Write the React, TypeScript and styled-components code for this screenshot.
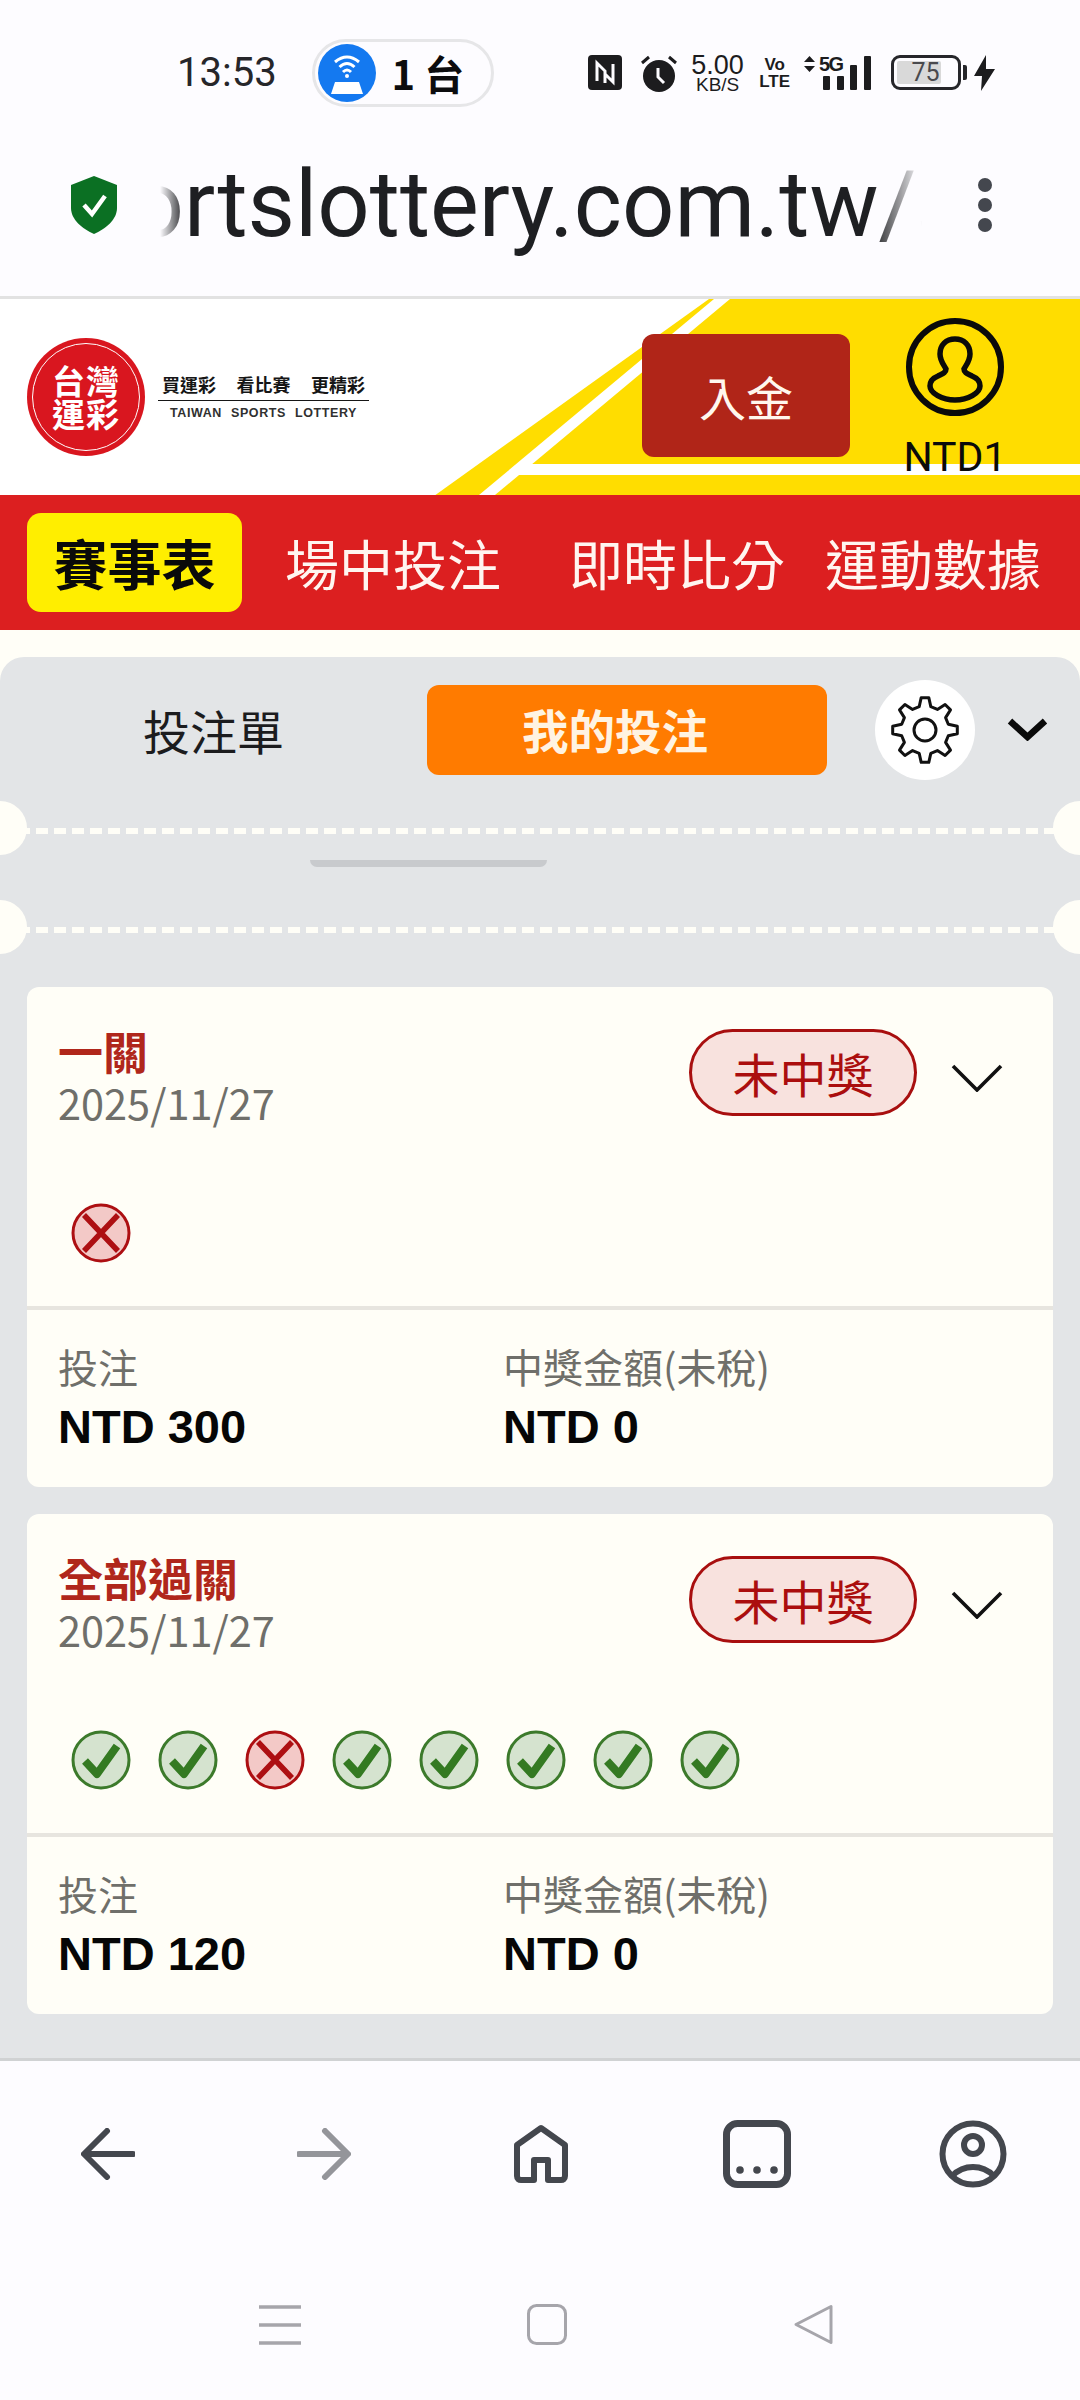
import React from 'react';
import styled, { createGlobalStyle } from 'styled-components';

const CJK = '"Noto Sans CJK TC", "Noto Sans", sans-serif';

const GlobalStyle = createGlobalStyle`
  html, body {
    margin: 0;
    padding: 0;
    background: #fdfcff;
    font-family: ${CJK};
  }
`;

// 8 tooth outline, centre 35/35
const gearPath = () => {
  const teeth = 8;
  const points: string[] = [];
  for (let i = 0; i < teeth; i++) {
    const a = (i * 2 * Math.PI) / teeth;
    const step = Math.PI / teeth;
    const pt = (r: number, t: number) =>
      `${(35 + r * Math.sin(t)).toFixed(1)} ${(35 - r * Math.cos(t)).toFixed(1)}`;
    points.push(pt(24, a - step * 0.62), pt(32.5, a - step * 0.3), pt(32.5, a + step * 0.3), pt(24, a + step * 0.62));
  }
  return `M${points.join(' L')} Z`;
};

interface BetCardProps {
  title: string;
  stake: string;
  results: boolean[];
}

const BetCard: React.FC<BetCardProps> = ({ title, stake, results }) => (
  <Card>
    <CardHead>
      <CardTop>
        <div>
          <CardTitle>{title}</CardTitle>
          <CardDate>2025/11/27</CardDate>
        </div>
        <Badge>未中獎</Badge>
        <CardChevron viewBox="0 0 52 28">
          <path d="M2 2 L26 26 L50 2" fill="none" stroke="#111" strokeWidth="3.6" />
        </CardChevron>
      </CardTop>
      <ResultRow>
        {results.map((won, index) => (
          <ResultIcon key={index} viewBox="0 0 60 60">
            {won ? (
              <>
                <circle cx="30" cy="30" r="28" fill="#d5e3cf" stroke="#3c7a2b" strokeWidth="3" />
                <path d="M14 31 L26 44 L46 16" fill="none" stroke="#347a22" strokeWidth="8" strokeLinejoin="round" />
              </>
            ) : (
              <>
                <circle cx="30" cy="30" r="28" fill="#f3c9c7" stroke="#ad0f12" strokeWidth="3" />
                <path d="M13 12 L47 48 M47 12 L13 48" fill="none" stroke="#ad0f12" strokeWidth="5.500" />
              </>
            )}
          </ResultIcon>
        ))}
      </ResultRow>
    </CardHead>
    <CardFoot>
      <FootCol>
        <FootLabel>投注</FootLabel>
        <FootValue>{stake}</FootValue>
      </FootCol>
      <FootCol>
        <FootLabel>中獎金額(未稅)</FootLabel>
        <FootValue>NTD 0</FootValue>
      </FootCol>
    </CardFoot>
  </Card>
);

const App: React.FC = () => (
  <Page>
    <GlobalStyle />
    <StatusBar>
      <Clock>13:53</Clock>
      <HotspotPill>
        <HotspotDot>
          <svg width="40" height="44" viewBox="0 0 40 44">
            <path d="M8 11 Q20 1 32 11 M12.500 16 Q20 9 27.500 16 M16 21 Q20 17 24 21" fill="none" stroke="#fff" strokeWidth="3" />
            <circle cx="20" cy="25" r="2" fill="#fff" />
            <path d="M8 31 H32 L36 43 H4 Z" fill="#fff" />
          </svg>
        </HotspotDot>
        <HotspotText>1 台</HotspotText>
      </HotspotPill>
      <StatusIcons>
        <svg width="34" height="35" viewBox="0 0 34 35">
          <rect width="34" height="35" rx="4" fill="#1c1c1e" />
          <path d="M9 26 V8 L17 16 V28 M25 9 V27 L17 19" fill="none" stroke="#fdfcff" strokeWidth="3" />
        </svg>
        <AlarmIcon width="38" height="38" viewBox="0 0 38 38">
          <circle cx="19" cy="22" r="16" fill="#1c1c1e" />
          <path d="M2 9 L9 3 M36 9 L29 3" stroke="#1c1c1e" strokeWidth="3" />
          <path d="M18 14 V23 L24 29" fill="none" stroke="#fdfcff" strokeWidth="3" />
        </AlarmIcon>
        <Speed>
          <SpeedValue>5.00</SpeedValue>
          <SpeedUnit>KB/S</SpeedUnit>
        </Speed>
        <VoLte>
          <span>Vo</span>
          <span>LTE</span>
        </VoLte>
        <svg width="68" height="36" viewBox="0 0 68 36">
          <path d="M0 7 L5.500 1 L11 7 Z M0 11 H11 L5.500 17 Z" fill="#1c1c1e" />
          <text x="15" y="16" fontFamily="Liberation Sans, sans-serif" fontWeight="700" fontSize="20" fill="#1c1c1e" textLength="25">5G</text>
          <rect x="19" y="21" width="7" height="14" rx="1" fill="#1c1c1e" />
          <rect x="33" y="21" width="7" height="14" rx="1" fill="#1c1c1e" />
          <rect x="46" y="10" width="7" height="25" rx="1" fill="#1c1c1e" />
          <rect x="60" y="1" width="7" height="34" rx="1" fill="#1c1c1e" />
        </svg>
        <Battery>
          <BatteryFill />
          <BatteryLevel>75</BatteryLevel>
        </Battery>
        <svg width="21" height="36" viewBox="0 0 21 36">
          <path d="M12 0 L0 21 H8 L7 36 L21 14 H12 Z" fill="#1c1c1e" />
        </svg>
      </StatusIcons>
    </StatusBar>

    <UrlBar>
      <svg width="46" height="58" viewBox="0 0 46 58">
        <path d="M23 0 L46 9 V32 C46 44 34 53 23 58 C12 53 0 44 0 32 V9 Z" fill="#0b7023" />
        <path d="M13 29 L21 38 L34 20" fill="none" stroke="#fff" strokeWidth="4.500" />
      </svg>
      <UrlClip>
        <UrlText>sportslottery.com.tw/s</UrlText>
      </UrlClip>
      <MenuDots>
        <i />
        <i />
        <i />
      </MenuDots>
    </UrlBar>

    <Header>
      <HeaderArt viewBox="0 0 1080 196" preserveAspectRatio="none">
        <path d="M709 0 H1080 V197 H434 Z" fill="#ffdd00" />
        <path d="M714 0 H730 L495 196 H479 Z" fill="#fff" />
        <path d="M530 165 H1080 V176 H516 Z" fill="#fff" />
      </HeaderArt>
      <Logo>
        <LogoMark>
          <span>台</span>
          <span>灣</span>
          <span>運</span>
          <span>彩</span>
        </LogoMark>
        <Slogan>
          <SloganTop>
            <span>買運彩</span>
            <span>看比賽</span>
            <span>更精彩</span>
          </SloganTop>
          <SloganBottom>
            <span>TAIWAN</span>
            <span>SPORTS</span>
            <span>LOTTERY</span>
          </SloganBottom>
        </Slogan>
      </Logo>
      <DepositButton>入金</DepositButton>
      <Account>
        <svg width="98" height="100" viewBox="0 0 98 100">
          <circle cx="49" cy="50" r="46" fill="none" stroke="#0a0a0a" strokeWidth="6" />
          <path
            d="M49 22 C58 22 64 28 64 37 C64 44 60 48 58 52 C58 56 62 57 66 59 C71 61 74 64 74 69 C74 76 62 83 49 83 C36 83 24 76 24 69 C24 64 27 61 32 59 C36 57 40 56 40 52 C38 48 34 44 34 37 C34 28 40 22 49 22 Z"
            fill="none"
            stroke="#0a0a0a"
            strokeWidth="5.500"
          />
        </svg>
        <Balance>NTD1</Balance>
      </Account>
    </Header>

    <MainNav>
      <NavActive>賽事表</NavActive>
      <NavLink $left={43}>場中投注</NavLink>
      <NavLink $left={68}>即時比分</NavLink>
      <NavLink $left={40}>運動數據</NavLink>
    </MainNav>

    <Backdrop>
      <Panel>
        <TabRow>
          <TabPlain>投注單</TabPlain>
          <TabActive>我的投注</TabActive>
          <GearButton>
            <svg width="70" height="70" viewBox="0 0 70 70">
              <path d={gearPath()} fill="none" stroke="#111" strokeWidth="3" strokeLinejoin="round" />
              <circle cx="35" cy="35" r="11" fill="none" stroke="#111" strokeWidth="3" />
            </svg>
          </GearButton>
          <PanelChevron viewBox="0 0 41 23">
            <path d="M3 3 L20.500 19 L38 3" fill="none" stroke="#0a0a0a" strokeWidth="6.500" />
          </PanelChevron>
        </TabRow>
        <TicketLine />
        <Handle />
        <TicketLine $second />
        <CardList>
          <BetCard title="一關" stake="NTD 300" results={[false]} />
          <BetCard title="全部過關" stake="NTD 120" results={[true, true, false, true, true, true, true, true]} />
        </CardList>
      </Panel>
    </Backdrop>

    <BrowserBar>
      <svg width="54" height="52" viewBox="0 0 54 52">
        <path d="M52 26 H4 M26 3 L3 26 L26 49" fill="none" stroke="#44474e" strokeWidth="6" strokeLinecap="round" strokeLinejoin="round" />
      </svg>
      <svg width="54" height="52" viewBox="0 0 54 52">
        <path d="M2 26 H50 M28 3 L51 26 L28 49" fill="none" stroke="#94959a" strokeWidth="6" strokeLinecap="round" strokeLinejoin="round" />
      </svg>
      <svg width="56" height="60" viewBox="0 0 56 60">
        <path d="M28 4 L52 21 V52 C52 55 50 56 48 56 H35 V36 H21 V56 H8 C6 56 4 55 4 52 V21 Z" fill="none" stroke="#44474e" strokeWidth="6" strokeLinejoin="round" />
      </svg>
      <svg width="68" height="68" viewBox="0 0 68 68">
        <rect x="3.500" y="3.500" width="61" height="61" rx="11" fill="none" stroke="#44474e" strokeWidth="7" />
        <circle cx="17" cy="50" r="3.800" fill="#44474e" />
        <circle cx="34" cy="50" r="3.800" fill="#44474e" />
        <circle cx="51" cy="50" r="3.800" fill="#44474e" />
      </svg>
      <svg width="68" height="68" viewBox="0 0 68 68">
        <circle cx="34" cy="34" r="30.500" fill="none" stroke="#44474e" strokeWidth="6" />
        <circle cx="34" cy="25" r="9" fill="none" stroke="#44474e" strokeWidth="6" />
        <path d="M13 56 C20 49 27 47 34 47 C41 47 48 49 55 56" fill="none" stroke="#44474e" strokeWidth="6" />
      </svg>
    </BrowserBar>

    <SystemNav>
      <svg width="42" height="42" viewBox="0 0 42 42">
        <path d="M0 3 H42 M0 21 H42 M0 39 H42" stroke="#a6a5ab" strokeWidth="3.500" />
      </svg>
      <svg width="40" height="41" viewBox="0 0 40 41">
        <rect x="1.500" y="1.500" width="37" height="38" rx="8" fill="none" stroke="#a6a5ab" strokeWidth="3" />
      </svg>
      <svg width="40" height="41" viewBox="0 0 40 41">
        <path d="M38 2.500 V38.500 L3 20.500 Z" fill="none" stroke="#a6a5ab" strokeWidth="3" strokeLinejoin="round" />
      </svg>
    </SystemNav>
  </Page>
);

const Page = styled.div`
  width: 1080px;
  height: 2400px;
  display: flex;
  flex-direction: column;
  overflow: hidden;
  background: #fdfcff;
`;

const StatusBar = styled.div`
  height: 145px;
  display: flex;
  align-items: center;
  padding-left: 177px;
  box-sizing: border-box;
`;

const Clock = styled.span`
  font: 400 40px/1 Roboto, sans-serif;
  color: #26262a;
`;

const HotspotPill = styled.div`
  width: 182px;
  height: 68px;
  margin-left: 35px;
  display: flex;
  align-items: center;
  box-sizing: border-box;
  padding-left: 3px;
  border: 3px solid #e6e6e8;
  border-radius: 34px;
`;

const HotspotDot = styled.div`
  width: 58px;
  height: 58px;
  border-radius: 50%;
  background: #1479f0;
  display: flex;
  align-items: center;
  justify-content: center;
`;

const HotspotText = styled.span`
  margin-left: 16px;
  font: 700 40px/1 ${CJK};
  color: #0c0c0e;
`;

const StatusIcons = styled.div`
  margin-left: 94px;
  display: flex;
  align-items: center;
`;

const AlarmIcon = styled.svg`
  margin-left: 18px;
`;

const Speed = styled.div`
  margin-left: 11px;
  width: 58px;
  display: flex;
  flex-direction: column;
  align-items: center;
  color: #1c1c1e;
  font-family: "Liberation Sans", sans-serif;
`;

const SpeedValue = styled.span`
  font-size: 27px;
  line-height: 24px;
`;

const SpeedUnit = styled.span`
  font-size: 19px;
  line-height: 16px;
`;

const VoLte = styled.div`
  margin-left: 15px;
  margin-right: 16px;
  width: 26px;
  display: flex;
  flex-direction: column;
  align-items: center;
  font: 700 17px/17px "Liberation Sans Narrow", "Liberation Sans", sans-serif;
  color: #1c1c1e;
`;

const Battery = styled.div`
  position: relative;
  margin-left: 19px;
  margin-right: 13px;
  width: 70px;
  height: 35px;
  box-sizing: border-box;
  border: 3px solid #26262a;
  border-radius: 9px;
  display: flex;
  align-items: center;
  justify-content: center;

  &::after {
    content: '';
    position: absolute;
    right: -9px;
    top: 7px;
    width: 4px;
    height: 15px;
    background: #26262a;
    border-radius: 0 2px 2px 0;
  }
`;

const BatteryFill = styled.div`
  position: absolute;
  left: 3px;
  top: 3px;
  bottom: 3px;
  width: 44px;
  background: #d9d9d9;
  border-radius: 2px;
`;

const BatteryLevel = styled.span`
  position: relative;
  font: 400 25px/1 Roboto, sans-serif;
  color: #4a4a4e;
`;

const UrlBar = styled.div`
  height: 151px;
  box-sizing: border-box;
  padding-bottom: 31px;
  display: flex;
  align-items: center;
  padding-left: 71px;
`;

const UrlClip = styled.div`
  width: 762px;
  height: 120px;
  margin-left: 43px;
  overflow: hidden;
  display: flex;
  justify-content: flex-end;
  white-space: nowrap;
  -webkit-mask-image: linear-gradient(90deg, transparent 0, #000 25px, #000 712px, transparent 762px);
  mask-image: linear-gradient(90deg, transparent 0, #000 25px, #000 712px, transparent 762px);
`;

const UrlText = styled.span`
  flex: none;
  margin-right: -42px;
  font: 400 92px/120px Roboto, sans-serif;
  color: #1e1f22;
`;

const MenuDots = styled.div`
  margin-left: 56px;
  display: flex;
  flex-direction: column;
  gap: 6px;

  i {
    display: block;
    width: 14px;
    height: 14px;
    border-radius: 50%;
    background: #44474e;
  }
`;

const Header = styled.header`
  position: relative;
  height: 199px;
  box-sizing: border-box;
  border-top: 3px solid #e2e2e2;
  background: #fff;
  display: flex;
  align-items: flex-start;
  padding-left: 27px;
`;

const HeaderArt = styled.svg`
  position: absolute;
  left: 0;
  top: 0;
  width: 1080px;
  height: 196px;
`;

const Logo = styled.div`
  position: relative;
  display: flex;
  align-items: center;
  margin-top: 39px;
`;

const LogoMark = styled.div`
  position: relative;
  width: 118px;
  height: 118px;
  border-radius: 50%;
  background: #d9161f;
  display: grid;
  grid-template-columns: 34px 34px;
  grid-template-rows: 33px 33px;
  align-content: center;
  justify-content: center;
  color: #fff;
  font: 700 33px/33px ${CJK};

  &::after {
    content: '';
    position: absolute;
    inset: 5px;
    border: 1.5px solid #fff;
    border-radius: 50%;
  }
`;

const Slogan = styled.div`
  margin-left: 13px;
  width: 211px;
  margin-top: -2px;
`;

const SloganTop = styled.div`
  display: flex;
  justify-content: space-between;
  padding: 0 4px 3px;
  font: 700 18px/26px ${CJK};
  color: #161616;
  border-bottom: 1.5px solid #161616;
`;

const SloganBottom = styled.div`
  display: flex;
  justify-content: space-between;
  padding: 3px 12px 0;
  font: 700 12.500px/18px "Liberation Sans", sans-serif;
  letter-spacing: 0.6px;
  color: #303030;
`;

const DepositButton = styled.div`
  position: relative;
  margin-top: 35px;
  margin-left: 273px;
  width: 208px;
  height: 123px;
  border-radius: 12px;
  background: #b02518;
  color: #fff7ee;
  font: 400 47px/123px ${CJK};
  text-align: center;
`;

const Account = styled.div`
  position: relative;
  margin-left: 56px;
  margin-top: 18px;
  width: 98px;
  display: flex;
  flex-direction: column;
  align-items: center;
`;

const Balance = styled.span`
  margin-top: 20px;
  font: 400 41px/1 Roboto, sans-serif;
  color: #0a0a0a;
  white-space: nowrap;
`;

const MainNav = styled.nav`
  height: 135px;
  background: #dc1f20;
  display: flex;
  align-items: center;
  padding-left: 27px;
`;

const NavActive = styled.div`
  width: 215px;
  height: 99px;
  border-radius: 14px;
  background: #ffee00;
  color: #0a0a0a;
  font: 700 54px/99px ${CJK};
  text-align: center;
`;

const NavLink = styled.div<{ $left: number }>`
  margin-left: ${p => p.$left}px;
  color: #fff5f0;
  font: 400 54px/99px ${CJK};
  white-space: nowrap;
`;

const Backdrop = styled.main`
  height: 1428px;
  box-sizing: border-box;
  padding-top: 27px;
  background: #fffef7;
`;

const Panel = styled.section`
  height: 1401px;
  display: flex;
  flex-direction: column;
  background: #e3e5e7;
  border-radius: 24px 24px 0 0;
  border-bottom: 3px solid #d0d2d3;
`;

const TabRow = styled.div`
  display: flex;
  align-items: center;
  height: 101px;
  margin-top: 22px;
`;

const TabPlain = styled.div`
  width: 427px;
  text-align: center;
  font: 400 47px/1 ${CJK};
  color: #1c1c1e;
`;

const TabActive = styled.div`
  width: 400px;
  height: 90px;
  box-sizing: border-box;
  padding-right: 24px;
  border-radius: 12px;
  background: #ff7b00;
  color: #fff3e2;
  font: 700 46.500px/88px ${CJK};
  text-align: center;
`;

const GearButton = styled.div`
  width: 100px;
  height: 100px;
  margin-left: 48px;
  border-radius: 50%;
  background: #fff;
  display: flex;
  align-items: center;
  justify-content: center;
`;

const PanelChevron = styled.svg`
  width: 41px;
  height: 23px;
  margin-left: 32px;
`;

const TicketLine = styled.div<{ $second?: boolean }>`
  position: relative;
  height: 6px;
  margin-top: ${p => (p.$second ? 60 : 48)}px;
  background: repeating-linear-gradient(90deg, #fffef7 0 12px, transparent 12px 18px);

  &::before,
  &::after {
    content: '';
    position: absolute;
    top: -27px;
    width: 54px;
    height: 54px;
    border-radius: 50%;
    background: #fffef7;
  }

  &::before {
    left: -27px;
  }

  &::after {
    right: -27px;
  }
`;

const Handle = styled.div`
  width: 237px;
  height: 7px;
  margin: 26px 0 0 310px;
  background: #c8cacd;
  border-radius: 0 0 30px 30px;
`;

const CardList = styled.div`
  margin-top: 54px;
  padding: 0 27px;
  display: flex;
  flex-direction: column;
  gap: 27px;
`;

const Card = styled.article`
  height: 500px;
  display: flex;
  flex-direction: column;
  background: #fffef7;
  border-radius: 12px;
`;

const CardHead = styled.div`
  flex: none;
  height: 319px;
  box-sizing: border-box;
  padding: 42px 0 43px 31px;
  display: flex;
  flex-direction: column;
  justify-content: space-between;
`;

const CardTop = styled.div`
  display: flex;
  align-items: flex-start;
`;

const CardTitle = styled.div`
  width: 632px;
  font: 700 45px/44px ${CJK};
  color: #b0271b;
`;

const CardDate = styled.div`
  margin-top: 11px;
  font: 400 41.500px/36px "Noto Sans CJK TC", "Noto Sans", sans-serif;
  color: #6f6f6a;
`;

const Badge = styled.div`
  width: 228px;
  height: 87px;
  margin-left: -1px;
  box-sizing: border-box;
  border: 3px solid #a80f0f;
  border-radius: 44px;
  background: #f8e2de;
  color: #ab0e0e;
  font: 400 47px/1 ${CJK};
  display: flex;
  align-items: center;
  justify-content: center;
`;

const CardChevron = styled.svg`
  width: 52px;
  height: 28px;
  margin: 35px 0 0 34px;
`;

const ResultRow = styled.div`
  display: flex;
  gap: 27px;
  padding-left: 13px;
`;

const ResultIcon = styled.svg`
  width: 60px;
  height: 60px;
`;

const CardFoot = styled.div`
  flex: 1;
  display: grid;
  grid-template-columns: 445px 1fr;
  align-content: start;
  padding: 29px 0 0 31px;
  border-top: 4px solid #e7e5df;
`;

const FootCol = styled.div`
  display: flex;
  flex-direction: column;
`;

const FootLabel = styled.span`
  font: 400 40px/54px ${CJK};
  color: #6f6f6a;
`;

const FootValue = styled.span`
  margin-top: 7px;
  font: 700 47px/54px "Liberation Sans", sans-serif;
  color: #060606;
`;

const BrowserBar = styled.div`
  height: 201px;
  box-sizing: border-box;
  padding: 0 0 10px 81px;
  display: grid;
  grid-template-columns: 216px 216px 210px 216px auto;
  justify-content: start;
  align-items: center;
`;

const SystemNav = styled.div`
  flex: 1;
  box-sizing: border-box;
  padding: 45px 247px 0 259px;
  display: flex;
  align-items: flex-start;
  justify-content: space-between;
`;

export default App;
